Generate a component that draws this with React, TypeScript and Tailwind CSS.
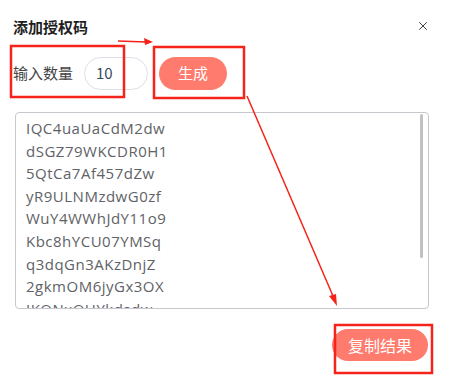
import { X } from "lucide-react";

const codes = [
  "IQC4uaUaCdM2dw",
  "dSGZ79WKCDR0H1",
  "5QtCa7Af457dZw",
  "yR9ULNMzdwG0zf",
  "WuY4WWhJdY11o9",
  "Kbc8hYCU07YMSq",
  "q3dqGn3AKzDnjZ",
  "2gkmOM6jyGx3OX",
  "IKONxQHYkdsdw",
];

const cjk = "font-['Microsoft_YaHei','Noto_Sans_CJK_SC',sans-serif]";

function Annotations() {
  return (
    <svg
      className="pointer-events-none absolute inset-0"
      width={449}
      height={384}
      viewBox="0 0 449 384"
    >
      <g fill="none" stroke="#f5231a" strokeWidth={2.5}>
        <rect x={11} y={46} width={113} height={51} />
        <rect x={154} y={47} width={90} height={51} />
        <rect x={335} y={325} width={97} height={48} />
      </g>
      <line x1={118} y1={41} x2={146} y2={42} stroke="#f5231a" strokeWidth={1.5} />
      <polygon points="153,42 144,38 145,45" fill="#f5231a" />
      <line x1={247} y1={96} x2={333} y2={296} stroke="#f5231a" strokeWidth={1.5} />
      <polygon points="337,306 329,296 336,294" fill="#f5231a" />
    </svg>
  );
}

export default function App() {
  return (
    <div className={`relative h-[384px] w-[449px] overflow-hidden bg-white ${cjk}`}>
      <div className="flex items-center justify-between pl-[13px] pr-[19px] pt-[16px]">
        <h2 className="text-[15px] font-bold leading-[22px] text-[#1f1f1f]">添加授权码</h2>
        <X size={14} strokeWidth={1.6} className="-mt-[2px] text-[#333]" />
      </div>

      <div className="mt-[19px] flex items-center pl-[13px]">
        <span className="text-[15px] text-[#444]">输入数量</span>
        <div className="ml-[11px] flex h-[33px] w-[64px] items-center rounded-full border border-[#dcdfe6] pl-[11px] text-[15px] text-[#3a4a5c]">
          10
        </div>
        <button
          type="button"
          className="ml-[11px] h-[33px] w-[68px] rounded-full bg-[#fe7b6d] text-[15px] text-white"
        >
          生成
        </button>
      </div>

      <div className="ml-[15px] mt-[22px] flex h-[197px] w-[414px] overflow-hidden rounded-[4px] border border-[#c6c8ce]">
        <div className="flex-1 pl-[10px] pt-[4px] font-['Open_Sans',sans-serif] text-[15px] leading-[22.6px] tracking-[0.5px] text-[#606266]">
          {codes.map((c) => (
            <div key={c}>{c}</div>
          ))}
        </div>
        <div className="w-[8px] pt-[1px]">
          <div className="h-[144px] w-[3px] rounded-full bg-[#c1c1c1]" />
        </div>
      </div>

      <div className="mt-[20px] flex justify-end pr-[21px]">
        <button
          type="button"
          className="h-[32px] w-[96px] rounded-full bg-[#fe7b6d] text-[16px] text-white"
        >
          复制结果
        </button>
      </div>

      <Annotations />
    </div>
  );
}
